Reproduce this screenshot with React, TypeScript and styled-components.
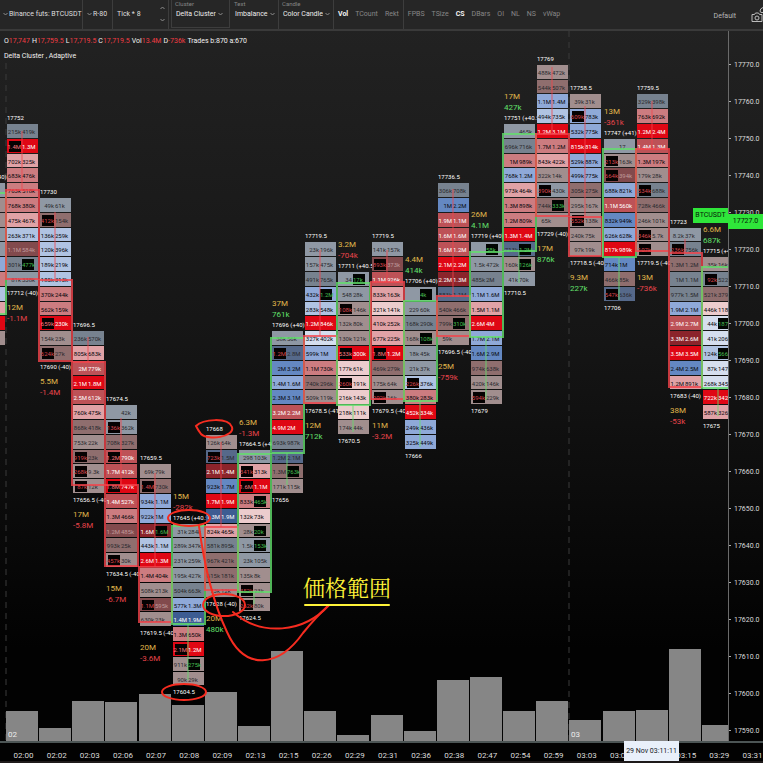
import React from "react";
import styled, { createGlobalStyle } from "styled-components";

const FONT = 'Roboto, "Liberation Sans", "Noto Sans CJK JP", sans-serif';

const GlobalStyle = createGlobalStyle`
  * { box-sizing: border-box; }
  body { margin: 0; background: #000; font-family: ${FONT}; }
  button, input, select { font: inherit; color: inherit; background: none; border: 0; padding: 0; margin: 0; }
`;

const RED = "#f2434b";
const GREEN = "#62e06c";

const Page = styled.main`
  display: flex;
  flex-direction: column;
  min-height: 100vh;
  overflow: hidden;
  color: #dedede;
  background: linear-gradient(#232323, #151515 45%, #020202 85%);
`;

const Toolbar = styled.header`
  display: flex;
  align-items: stretch;
  height: 31px;
  padding-left: 3px;
  background: #262626;
  border-bottom: 2px solid #3a3a3a;
  font-size: 7px;
`;

const Group = styled.div<{ $width: number; $boxed?: boolean }>`
  position: relative;
  display: flex;
  align-items: center;
  gap: 2px;
  flex: 0 0 ${(p) => p.$width}px;
  padding: 0 3px 2px 4px;
  border-right: 1px solid #3d3d3d;
  ${(p) => p.$boxed && "border-left: 1px solid #3d3d3d; border-bottom: 1px solid #3d3d3d; margin: 0 1px 1px 2px; padding-bottom: 0;"}
`;

const PlainGroup = styled(Group)`
  padding: 0 0 2px;
`;

const GroupLabel = styled.label`
  position: absolute;
  top: 0;
  left: 3px;
  font-size: 6px;
  line-height: 8px;
  color: #858585;
`;

const MenuButton = styled.button`
  display: flex;
  align-items: center;
  gap: 1px;
  white-space: nowrap;
`;

const Picker = styled.select`
  appearance: none;
  color: #ececec;
`;

const TickField = styled.label`
  display: flex;
  align-items: center;
  gap: 2px;
  flex: 1;
  white-space: nowrap;
`;

const TickInput = styled.input`
  width: 14px;
`;

const Stepper = styled.div`
  display: flex;
  flex-direction: column;
  gap: 8px;
  button { display: flex; }
`;

const Toggles = styled.div<{ $divided?: boolean }>`
  display: flex;
  align-items: center;
  gap: 7px;
  padding: 0 4px 2px;
  ${(p) => p.$divided && "border-right: 1px solid #3d3d3d;"}
`;

const Toggle = styled.button<{ $on?: boolean }>`
  color: ${(p) => (p.$on ? "#f4f4f4" : "#868686")};
  font-weight: ${(p) => (p.$on ? 700 : 400)};
`;

const Actions = styled.div`
  display: flex;
  align-items: center;
  gap: 15px;
  margin-left: auto;
  padding-top: 3px;
  color: #b8b8b8;
  button { display: flex; }
`;

const Chart = styled.section`
  position: relative;
  flex: 1;
  display: grid;
  grid-template-columns: minmax(0, 1fr) 35px;
  grid-template-rows: minmax(0, 1fr) 22px;
`;

const Legend = styled.div`
  position: absolute;
  top: 3px;
  left: 4px;
  font-size: 7px;
  line-height: 15px;
  white-space: nowrap;
  color: #f2f2f2;
`;

const Reading = styled.span`
  margin-right: 2px;
  b { font-weight: 400; color: #f03c43; }
`;

const Plot = styled.svg`
  display: block;
  width: 100%;
  height: 710px;
  min-height: 100%;
`;

const PriceAxis = styled.div`
  padding-top: 15px;
  height: 710px;
  min-height: 100%;
  overflow: hidden;
  border-left: 1px solid #6a6a6a;
  font-size: 7px;
  color: #dadada;
`;

const PriceTick = styled.div`
  display: flex;
  align-items: center;
  gap: 3px;
  height: 37px;
  &::before { content: ""; width: 2px; height: 1px; background: #aaa; }
`;

const TimeAxis = styled.div`
  grid-column: 1 / -1;
  display: grid;
  grid-template-columns: repeat(23, minmax(0, 1fr));
  margin-right: -6px;
  padding-left: 7px;
  border-top: 2px solid #4c5555;
  border-bottom: 2px solid #1e1a1a;
  font-size: 8px;
  line-height: 25px;
  text-align: center;
  color: #dadada;
`;

const Tag = styled.div`
  position: absolute;
  z-index: 1;
  font-size: 7px;
  line-height: 15px;
  text-align: center;
  color: #062006;
  background: #2fe63a;
`;

const SymbolTag = styled(Tag)`
  top: 177px;
  right: 35px;
  width: 35px;
`;

const PriceTag = styled(Tag)`
  top: 183px;
  right: 0;
  width: 35px;
`;

const TimeTag = styled.div`
  position: absolute;
  right: 84px;
  bottom: 2px;
  width: 55px;
  font-size: 7px;
  line-height: 20px;
  text-align: center;
  white-space: nowrap;
  color: #15181d;
  background: #e9f0fa;
`;

const Chevron = ({ up }: { up?: boolean }) => (
  <svg width="5" height="4" viewBox="0 0 5 4" fill="none" stroke="#8d8d8d" aria-hidden="true">
    <path d={up ? "M0.5 3 L2.5 1 L4.5 3" : "M0.5 1 L2.5 3 L4.5 1"} />
  </svg>
);

const FILLS: Record<string, string> = {
  a: "#8f98a4", b: "#77828f", c: "#56698a", d: "#a18e8e", e: "#8f6e6e", f: "#824a4d",
  g: "#cc7c80", h: "#e0a2a6", i: "#eccccd", j: "#bd5257", k: "#df0714", r: "#8b242b",
  m: "#b0c3e2", n: "#8fa9d8", o: "#6488c2", p: "#3d5c92", q: "#d5deee",
};
const inkFor = (fill: string) => {
  if ("jkrp".includes(fill)) return "#fff";
  if (fill === "f") return "#c09a9b";
  return "abcde".includes(fill) ? "#2a2a2e" : "#08080c";
};

type Column = {
  row: number;
  high: string;
  low: string;
  vol: string;
  delta: string;
  body: [number, number];
  wick: number;
  bar: number;
  cells: string;
};

/* Each cell is "fill bid ask", with L or R when that side has an imbalance. */
const COLUMNS: Column[] = [
  { row: 0, high: "17752", low: "17712 (-40)", vol: "12M", delta: "-1.1M", body: [190, 279], wick: 131, bar: 711,
    cells: "b 215k 419k|k 1.4M 1.3M L|h 702k 325k|g 683k 476k|g 763k 518k|g 768k 380k|h 475k 467k|m 263k 371k|f 1.1M 584k|b 301k 477k R|a 81k 338k" },
  { row: 5, high: "17730", low: "17690 (-40)", vol: "5.5M", delta: "-1.4M", body: [280, 361], wick: 212, bar: 728,
    cells: "a 49k 61k|e 412k 154k L|m 136k 259k|m 120k 396k|m 189k 219k|m 185k 313k|g 370k 244k|g 562k 159k|k 659k 230k L|d 154k 23k|e 624k 27k L" },
  { row: 14, high: "17696.5", low: "17656.5 (-40)", vol: "17M", delta: "-5.8M", body: [362, 485], wick: 337, bar: 701,
    cells: "b 236k 570k|h 805k 683k|j 2M 779k|k 2.1M 1.8M|j 2.5M 612k|h 760k 475k|e 868k 418k|d 753k 22k|e 919k 23k L|d 268k 9.3k L|d 87k 12k L" },
  { row: 19, high: "17674.5", low: "17634.5 (-40)", vol: "15M", delta: "-6.7M", body: [485, 566], wick: 418, bar: 702,
    cells: "a - 42k|a 136k 362k L|e 708k 327k|j 1.2M 790k L|j 1.7M 412k|k 1.8M 747k L|j 1.4M 527k|g 1.3M 466k|f 1.2M 485k|e 993k 25k|d 457k 30k L" },
  { row: 23, high: "17659.5", low: "17619.5 (-40)", vol: "20M", delta: "-3.6M", body: [567, 622], wick: 473, bar: 694,
    cells: "d 69k 79k|e 1.4M 730k L|n 934k 1.1M|n 922k 1M|r 1.6M 1.6M R|m 443k 1.1M|k 2.6M 1.3M|g 1.4M 404k|d 508k 213k|f 1.1M 595k L|d 630k 23k" },
  { row: 27, high: "17645 (+40.5)", low: "17604.5", vol: "15M", delta: "-282k", body: [526, 624], wick: 680, bar: 705,
    cells: "a 31k 284k|a 289k 347k|a 231k 259k|a 195k 427k|b 504k 663k|n 577k 1.3M|p 1.4M 1.9M|g 1.3M 650k|k 2.1M 1.2M L|d 911k 275k R|d 90k 29k" },
  { row: 21, high: "17668", low: "17628 (-40)", vol: "20M", delta: "480k", body: [527, 590], wick: 442, bar: 692,
    cells: "d 126k 64k|c 723k 1.5M L|r 2.1M 1.4M|o 923k 1.7M|k 1.7M 1.9M|p 1.3M 1.9M|h 824k 465k|b 581k 895k|e 967k 421k|e 615k 181k|d 73k 12k" },
  { row: 22, high: "17664.5 (+40)", low: "17624.5", vol: "6.3M", delta: "-1.3M", body: [454, 592], wick: 604, bar: 726,
    cells: "a 298 103k|h 341k 313k L|k 1.6M 1.1M L|g 833k 465k R|i 132k 73k|d 28k 20k R|a 1.5k 153k R|a 23k 105k|d 135k 8k|d 452k 23k L|d 262k 80k L" },
  { row: 14, high: "17696 (+40)", low: "17656", vol: "37M", delta: "761k", body: [338, 453], wick: 485, bar: 651,
    cells: "a 38k 56k|c 1.2M 2.8M L|o 2M 3.2M|n 1.4M 1.6M|o 2.3M 3.1M|j 3.2M 2.2M|k 4.9M 2M|b 693k 987k|c 1.2M 2.1M|e 1.3M 763k R|d 171k 115k" },
  { row: 8, high: "17719.5", low: "17678.5 (-41)", vol: "12M", delta: "712k", body: [336, 403], wick: 250, bar: 711,
    cells: "a 23k 196k|a 157k 475k|b 491k 765k|n 432k 1.2M R|m 283k 548k|k 1.2M 846k|q 327k 402k|n 599k 1M|g 1.1M 730k|e 740k 296k|d 509k 119k" },
  { row: 10, high: "17711 (+40.5)", low: "17670.5", vol: "3.2M", delta: "-704k", body: [283, 405], wick: 432, bar: 735,
    cells: "a 34 17k R|a 548 28k|d 108k 146k L|d 132k 80k|d 130k 121k|k 533k 300k L|i 177k 61k|i 260k 191k L|i 216k 143k|i 218k 111k|d 174k 44k" },
  { row: 8, high: "17719.5", low: "17679.5 (-40)", vol: "11M", delta: "-3.2M", body: [282, 399], wick: 250, bar: 715,
    cells: "a 141k 157k|f 893k 373k L|j 1.1M 926k|h 833k 163k|i 321k 141k|h 410k 252k|h 677k 225k|k 1.8M 1.2M L|e 469k 279k|d 175k 64k|d 202k 16k L" },
  { row: 11, high: "17706 (+40)", low: "17666", vol: "4.4M", delta: "414k", body: [301, 401], wick: 447, bar: 731,
    cells: "a - 4k R|a 229 60k|b 168k 290k|d 168k 108k R|a 18k 45k|a 21k 37k|m 226k 376k L|g 380k 283k|k 452k 334k|n 249k 436k|n 325k 449k" },
  { row: 4, high: "17736.5", low: "17696.5 (-40)", vol: "25M", delta: "-759k", body: [296, 336], wick: 189, bar: 680,
    cells: "b 306k 708k|o 1M 2.2M|j 1.9M 1.1M|j 1.6M 1.6M|j 1.6M 1.2M|k 2.1M 2.2M|r 2.2M 1.3M|c 883k 1.1M|e 540k 466k|e 799k 310k R|d 59k -" },
  { row: 8, high: "17719 (+40)", low: "17679", vol: "26M", delta: "4.1M", body: [252, 337], wick: 400, bar: 677,
    cells: "a - 58k R|a 1.5k 472k|b 485k 2M|n 1.1M 1.6M|h 1.5M 1.1M|k 2.6M 4M|n 1.7M 2.1M|o 1.6M 2.9M|e 974k 638k|d 420k 146k|d 594k 229k L" },
  { row: 0, high: "17751 (+40.5)", low: "17710.5", vol: "17M", delta: "427k", body: [134, 251], wick: 283, bar: 711,
    cells: "a - 465k|b 696k 716k|g 1M 989k|n 768k 1.2M|h 973k 464k|g 1.3M 898k|g 1.2M 809k|k 1.3M 1.4M|c 713k 1.2M R|d 160k 126k R|a 41k 70k" },
  { row: -4, high: "17769", low: "17729 (-40)", vol: "17M", delta: "876k", body: [134, 216], wick: 67, bar: 701,
    cells: "d 488k 472k|e 544k 507k|n 1.1M 1.4M|m 494k 735k|k 1.2M 3.1M|g 1.7M 1.2M|h 843k 422k|d 322k 14k|a 390k 430k L|e 744k 333k R|d 65k -" },
  { row: -2, high: "17758.5", low: "17718.5 (-40)", vol: "9.3M", delta: "227k", body: [217, 256], wick: 106, bar: 720,
    cells: "d 39k 31k|n 609k 783k L|n 532k 775k|k 815k 814k|n 529k 887k|n 499k 775k|e 305k 275k|d 295k 167k|d 552k 138k L|d 240k 75k|d 97k 19k" },
  { row: 1, high: "17747 (+41)", low: "17706", vol: "13M", delta: "-361k", body: [149, 257], wick: 300, bar: 711,
    cells: "a - 17|d 213k 163k L|f 664k 394k L|n 688k 821k|j 1.1M 560k|o 832k 949k|n 626k 628k|k 817k 989k|o 714k 1M|e 466k 85k|c 547k 636k L" },
  { row: -2, high: "17759.5", low: "17719.5 (-40)", vol: "13M", delta: "-736k", body: [149, 251], wick: 101, bar: 710,
    cells: "b 329k 398k|g 763k 692k|k 1.2M 2.4M|j 1.4M 1.3M|g 1.3M 197k|d 179k 28k|b 534k 688k L|e 728k 466k|d 246k 101k|d 346k 5.7k L|d 107k - L" },
  { row: 7, high: "17723", low: "17683 (-40)", vol: "38M", delta: "-53k", body: [253, 387], wick: 239, bar: 649,
    cells: "a 8.2k 37k|b 236k 756k L|e 1.3M 1.2M|b 1M 1.1M|b 977k 1.5M|n 1.9M 2.1M|j 2.9M 2.7M|r 3.3M 2.6M|k 3.5M 3.5M|o 2.4M 2.5M|h 1.2M 891k" },
  { row: 9, high: "17715 (+40)", low: "17675", vol: "6.6M", delta: "687k", body: [267, 388], wick: 416, bar: 725,
    cells: "d 35k 16k|b 92k 522k L|e 521k 379k|i 446k 118k|q 44k 187k R|q 41k 206k|m 124k 566k R|q 87k 147k|q 268k 345k|k 722k 342k|h 587k 326k" },
];

const EARLIER: Column = {
  row: 4, high: "17736 (+40)", low: "", vol: "", delta: "", body: [193, 314], wick: 330, bar: 741,
  cells: "a - -|d - -|d - -|a - -|a - -|n - -|g - -|m - -|h - -|k - -|d - -",
};

const TIMES = [
  "02:00", "02:02", "02:03", "02:06", "02:07", "02:08", "02:09", "02:13", "02:15", "02:26", "02:29", "02:31",
  "02:36", "02:38", "02:47", "02:54", "02:59", "03:03", "03:08", "", "03:15", "03:29", "03:31",
];
const PRICES = Array.from({ length: 19 }, (_, i) => `${17770 - i * 10}.0`);

const columnX = (i: number) => Math.round(7 + (i * 696) / 21);
const rowY = (row: number) => Math.round(124 + (row * 74) / 5);

const CellText = styled.text<{ $ink: string; $end?: boolean }>`
  font-size: 6px;
  fill: ${(p) => p.$ink};
  text-anchor: ${(p) => (p.$end ? "end" : "start")};
`;

const PriceText = styled.text`
  font-size: 6px;
  fill: #fff;
`;

const HourText = styled.text`
  font-size: 8px;
  fill: #ececec;
`;

const StatText = styled.text<{ $tone: "volume" | "up" | "down" }>`
  font-size: 8px;
  fill: ${(p) => ({ volume: "#e0b94c", up: GREEN, down: "#e8444b" })[p.$tone]};
`;

const NoteText = styled.text`
  font-family: "Noto Serif CJK JP", "Noto Sans CJK JP", sans-serif;
  font-size: 22px;
  font-weight: 400;
  text-anchor: middle;
  fill: #fff338;
`;

const Cell = ({ x, row, spec }: { x: number; row: number; spec: string }) => {
  const [fill, bid, ask, mark] = spec.split(" ");
  const y = rowY(row);
  const height = rowY(row + 1) - y - 1;
  const ink = inkFor(fill);
  return (
    <g>
      <rect x={x} y={y} width={31} height={height} fill={FILLS[fill]} />
      {mark === "L" && <rect x={x + 2} y={y + 2} width={12} height={height - 3} fill="#050202" />}
      {mark === "R" && <rect x={x + 15} y={y + 2} width={12} height={height - 3} fill="#020502" />}
      {bid !== "-" && (
        <CellText x={x + 14} y={y + 10} $end $ink={mark === "L" ? (ink === "#fff" ? "#ff7a80" : "#d8484e") : ink}>{bid}</CellText>
      )}
      {ask !== "-" && (
        <CellText x={x + 15} y={y + 10} $ink={mark === "R" ? "#46bd50" : ink}>{ask}</CellText>
      )}
    </g>
  );
};

const Cluster = ({ x, data }: { x: number; data: Column }) => {
  const cells = data.cells.split("|");
  const rising = data.high.includes("(");
  const top = rowY(data.row);
  const bottom = rowY(data.row + cells.length);
  const color = rising ? GREEN : RED;
  const [open, close] = data.body;
  const volumeY = rising ? top - 25 : bottom + 23;
  return (
    <g>
      <g stroke={color} strokeOpacity={0.8} fill="none">
        {cells.map((spec, i) => <g key={i} stroke="none"><Cell x={x} row={data.row + i} spec={spec} /></g>)}
        <line x1={x + 15} x2={x + 15} y1={rising ? close : data.wick} y2={rising ? data.wick : open} />
        <rect x={x - 1} y={open} width={33} height={close - open} strokeWidth={2} />
      </g>
      <PriceText x={x} y={top - 4}>{data.high}</PriceText>
      <PriceText x={x} y={bottom + 8}>{data.low}</PriceText>
      <StatText x={x} y={volumeY} $tone="volume">{data.vol}</StatText>
      <StatText x={x} y={volumeY + 11} $tone={data.delta.startsWith("-") ? "down" : "up"}>{data.delta}</StatText>
    </g>
  );
};

const Annotations = () => (
  <g fill="none" stroke="#f62c20" strokeWidth={2} strokeLinecap="round">
    <path d="M196 426 C203 419 228 417 232 427 C235 437 208 441 201 434 Q198 430 196 426 Z" />
    <ellipse cx={189} cy={518} rx={21} ry={8} />
    <ellipse cx={224} cy={605} rx={21} ry={11} />
    <ellipse cx={184} cy={692} rx={22} ry={8} />
    <path d="M199 526 C203 556 210 596 227 632 C245 672 279 667 303 633 Q316 617 329 605" />
    <path d="M233 612 C261 637 304 633 329 605" />
    <line x1={305} x2={389} y1={605} y2={605} stroke="#fff338" />
  </g>
);

export default function App() {
  return (
    <>
      <GlobalStyle />
      <Page>
        <Toolbar>
          <PlainGroup $width={80}><MenuButton><Chevron />Binance futs: BTCUSDT</MenuButton></PlainGroup>
          <Group $width={30}><MenuButton><Chevron />R-80</MenuButton></Group>
          <Group $width={56}>
            <TickField>Tick *<TickInput defaultValue="8" /></TickField>
            <Stepper>
              <button aria-label="Increase tick"><Chevron up /></button>
              <button aria-label="Decrease tick"><Chevron /></button>
            </Stepper>
          </Group>
          <Group $width={59} $boxed>
            <GroupLabel htmlFor="cluster">Cluster</GroupLabel>
            <Picker id="cluster"><option>Delta Cluster</option></Picker><Chevron />
          </Group>
          <Group $width={48}>
            <GroupLabel htmlFor="text">Text</GroupLabel>
            <Picker id="text"><option>Imbalance</option></Picker><Chevron />
          </Group>
          <Group $width={55}>
            <GroupLabel htmlFor="candle">Candle</GroupLabel>
            <Picker id="candle"><option>Color Candle</option></Picker><Chevron />
          </Group>
          <Toggles $divided>
            <Toggle $on>Vol</Toggle><Toggle>TCount</Toggle><Toggle>Rekt</Toggle>
          </Toggles>
          <Toggles>
            <Toggle>FPBS</Toggle><Toggle>TSize</Toggle><Toggle $on>CS</Toggle><Toggle>DBars</Toggle>
            <Toggle>OI</Toggle><Toggle>NL</Toggle><Toggle>NS</Toggle><Toggle>vWap</Toggle>
          </Toggles>
          <Actions>
            <button>Default</button>
            <button aria-label="Take a snapshot">
              <svg width="12" height="18" viewBox="0 0 12 18" fill="none" stroke="#bdbdbd">
                <path d="M1 7.5h2.5l1-1.5h3l1 1.5H11v7H1z" />
                <circle cx="6" cy="11" r="2" />
                <path d="M12 0.5q-3 1-3 3.500q0 2 3 1.500" />
              </svg>
            </button>
          </Actions>
        </Toolbar>
        <Chart>
          <Plot viewBox="0 31 728 710" preserveAspectRatio="xMinYMin slice" role="img" aria-label="Delta cluster chart">
            <g stroke="#3a3a3a" strokeDasharray="6 5">
              <line x1={6} x2={6} y1={63} y2={741} />
              <line x1={569} x2={569} y1={31} y2={741} />
            </g>
            {COLUMNS.map((c, i) => (
              <rect key={i} x={columnX(i) - 1} y={c.bar} width={32} height={741 - c.bar} fill="#868686" />
            ))}
            <Cluster x={columnX(-1)} data={EARLIER} />
            {COLUMNS.map((c, i) => <Cluster key={i} x={columnX(i)} data={c} />)}
            <HourText x={8} y={737}>02</HourText>
            <HourText x={571} y={737}>03</HourText>
            <Annotations />
            <NoteText x={347} y={596}>価格範囲</NoteText>
          </Plot>
          <PriceAxis>
            {PRICES.map((p) => <PriceTick key={p}>{p}</PriceTick>)}
          </PriceAxis>
          <TimeAxis>
            {TIMES.map((t, i) => <span key={i}>{t}</span>)}
          </TimeAxis>
          <Legend>
            <div>
              <Reading>O<b>17,747</b></Reading>
              <Reading>H<b>17,759.5</b></Reading>
              <Reading>L<b>17,719.5</b></Reading>
              <Reading>C<b>17,719.5</b></Reading>
              <Reading>Vol<b>13.4M</b></Reading>
              <Reading>D<b>-736k</b></Reading>
              <Reading>Trades b:870 a:670</Reading>
            </div>
            <div>Delta Cluster , Adaptive</div>
          </Legend>
          <SymbolTag>BTCUSDT</SymbolTag>
          <PriceTag>17727.0</PriceTag>
          <TimeTag>29 Nov 03:11:11</TimeTag>
        </Chart>
      </Page>
    </>
  );
}
